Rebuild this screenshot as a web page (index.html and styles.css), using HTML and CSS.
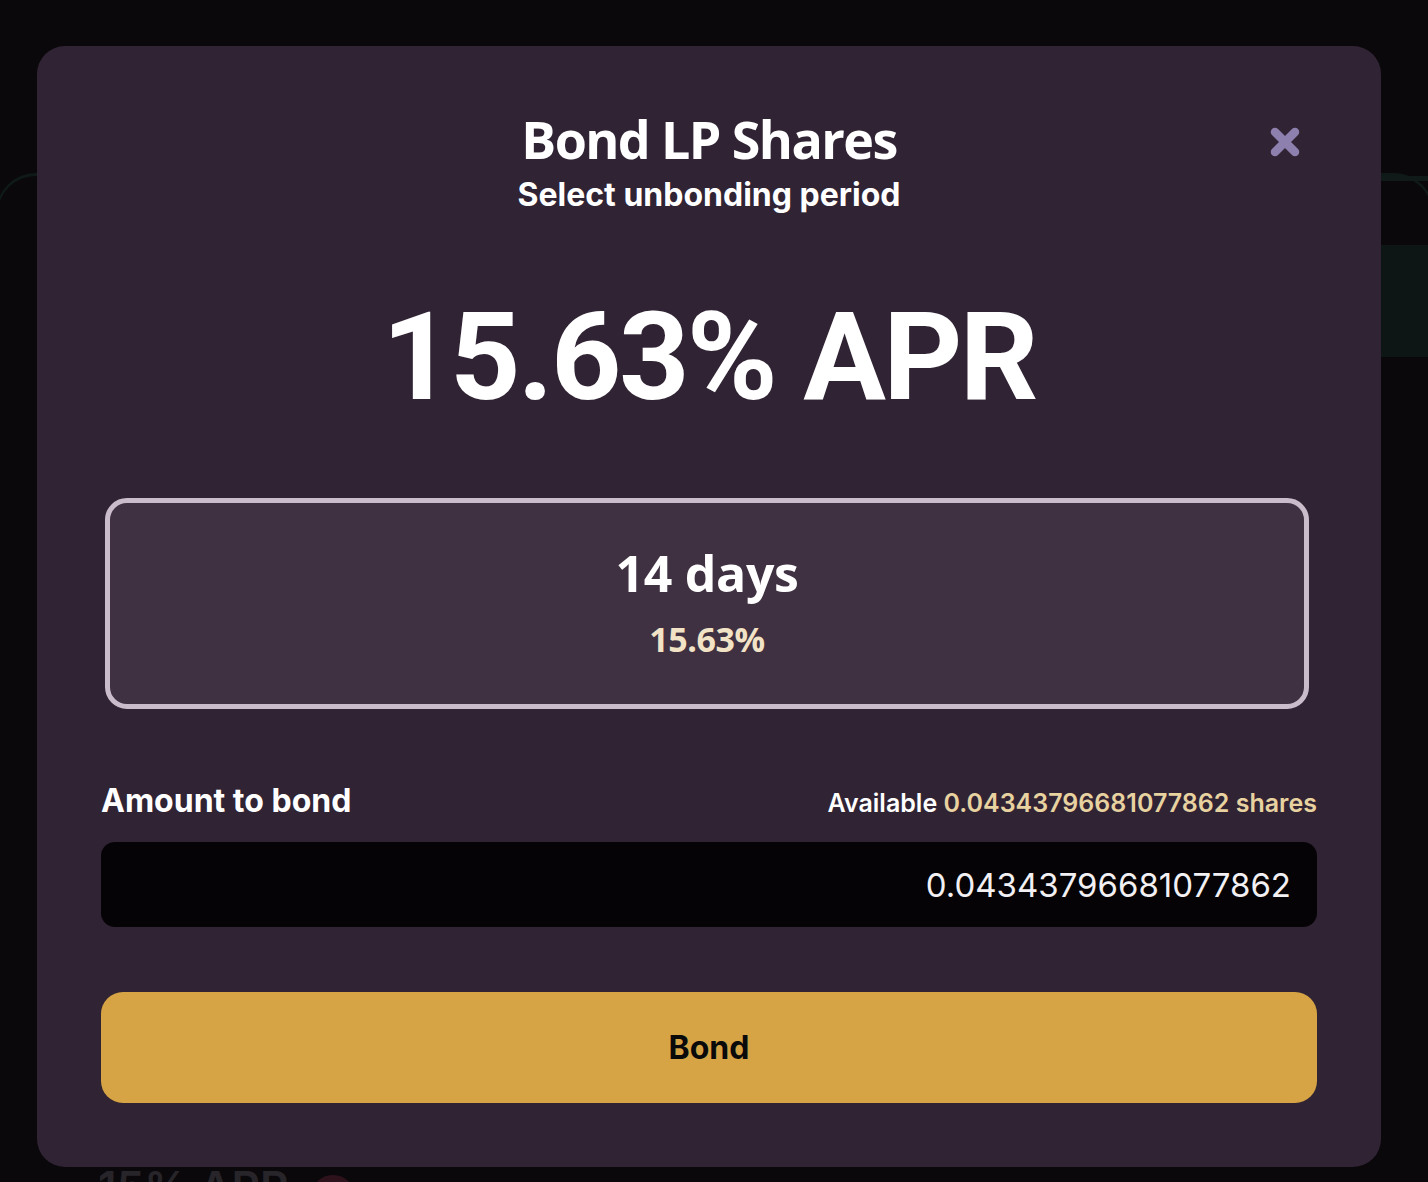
FILE: index.html
```html
<!DOCTYPE html>
<html lang="en">
<head>
<meta charset="utf-8">
<title>Bond LP Shares</title>
<link rel="stylesheet" href="styles.css">
</head>
<body>
<div class="page">
  <div class="bg-card">
    <div class="bg-strip"></div>
    <div class="bg-row">
      <div class="bg-fill"></div>
      <div class="bg-block"></div>
    </div>
    <div class="bg-bottom">
      <span class="bg-apr">15% APR</span>
      <span class="bg-ring"></span>
    </div>
  </div>
</div>

<div class="overlay">
  <div class="modal" role="dialog" aria-labelledby="modal-title">
    <div class="modal-header">
      <div class="spacer"></div>
      <div class="heading">
        <h1 id="modal-title" class="title">Bond LP Shares</h1>
        <p class="subtitle">Select unbonding period</p>
      </div>
      <button class="close" aria-label="Close">
        <svg width="30" height="30" viewBox="0 0 30 30" aria-hidden="true">
          <path d="M5 5 L25 25 M25 5 L5 25" stroke="#8e80ae" stroke-width="8.5" stroke-linecap="round" fill="none"/>
        </svg>
      </button>
    </div>

    <div class="apr">15.63% APR</div>

    <div class="period-card">
      <div class="period-days">14 days</div>
      <div class="period-rate">15.63%</div>
    </div>

    <div class="amount-row">
      <span class="amount-label">Amount to bond</span>
      <span class="available">Available <span class="available-value">0.04343796681077862 shares</span></span>
    </div>

    <input class="amount-input" type="text" value="0.04343796681077862" readonly>

    <button class="bond-btn">Bond</button>
  </div>
</div>
</body>
</html>
```

FILE: styles.css
```css
* {
  box-sizing: border-box;
}

html, body {
  margin: 0;
  padding: 0;
}

body {
  background: #0a080b;
  width: 1428px;
  height: 1182px;
  overflow: hidden;
  font-family: "Inter", "Liberation Sans", sans-serif;
}

/* ---------- background page (dimmed, behind modal) ---------- */
.page {
  padding-top: 173px;
}

.bg-card {
  margin: 0 -6px 0 -4px;
  height: 1040px;
  border: 2px solid #0f1a18;
  border-top-width: 3px;
  border-radius: 40px;
  display: flex;
  flex-direction: column;
}

.bg-strip {
  align-self: flex-end;
  width: 300px;
  height: 5px;
  background: #101a18;
}

.bg-row {
  display: flex;
  margin-top: 64px;
  height: 112px;
}

.bg-fill {
  flex: 1;
}

.bg-block {
  width: 260px;
  background: #0e1615;
}

.bg-bottom {
  margin-top: auto;
  padding: 0 0 0 100px;
  display: flex;
  align-items: flex-start;
  gap: 22px;
  height: 32px;
}

.bg-apr {
  font-family: "Inter", sans-serif;
  font-weight: 600;
  font-size: 44px;
  line-height: 44px;
  color: #28252a;
  margin-top: -14px;
}

.bg-ring {
  width: 44px;
  height: 44px;
  border-radius: 50%;
  border: 8px solid #2e121b;
  margin-top: -4px;
}

/* ---------- modal ---------- */
.overlay {
  position: fixed;
  inset: 0;
  display: flex;
  align-items: flex-start;
  padding: 46px 0 0 37px;
}

.modal {
  width: 1344px;
  background: #302334;
  border-radius: 28px;
  padding: 63px 64px 64px;
  display: flex;
  flex-direction: column;
}

.modal-header {
  display: grid;
  grid-template-columns: 1fr auto 1fr;
}

.heading {
  text-align: center;
}

.title {
  margin: 0;
  font-family: "Open Sans", sans-serif;
  font-weight: 700;
  font-size: 52px;
  line-height: 60px;
  letter-spacing: -1.6px;
  color: #ffffff;
}

.subtitle {
  margin: 7px 0 0;
  font-family: "Inter", sans-serif;
  font-weight: 700;
  font-size: 32px;
  line-height: 38px;
  color: #ffffff;
}

.close {
  justify-self: end;
  align-self: start;
  margin: 18px 17px 0 0;
  padding: 0;
  width: 30px;
  height: 30px;
  border: 0;
  background: transparent;
  cursor: pointer;
  display: flex;
}

.apr {
  margin-top: 82px;
  text-align: center;
  font-family: "Roboto", sans-serif;
  font-weight: 700;
  font-size: 123px;
  line-height: 123px;
  letter-spacing: -2.6px;
  color: #ffffff;
}

.period-card {
  margin: 79px 8px 0 4px;
  border: 5px solid #cbbccb;
  border-radius: 22px;
  background: #3f3042;
  padding: 41px 0 45px;
  text-align: center;
}

.period-days {
  font-family: "Open Sans", sans-serif;
  font-weight: 700;
  font-size: 50px;
  line-height: 58px;
  letter-spacing: -0.3px;
  color: #ffffff;
}

.period-rate {
  margin-top: 17px;
  font-family: "Open Sans", sans-serif;
  font-weight: 700;
  font-size: 34px;
  line-height: 40px;
  letter-spacing: -0.4px;
  color: #f2e3c6;
}

.amount-row {
  margin-top: 73px;
  display: flex;
  justify-content: space-between;
  align-items: baseline;
}

.amount-label {
  font-weight: 700;
  font-size: 32px;
  line-height: 38px;
  color: #ffffff;
}

.available {
  font-weight: 600;
  font-size: 25px;
  line-height: 30px;
  color: #ffffff;
}

.available-value {
  color: #e8d2a0;
}

.amount-input {
  margin-top: 22px;
  width: 100%;
  height: 85px;
  border: 0;
  outline: none;
  border-radius: 14px;
  background: #050305;
  padding: 0 26px;
  text-align: right;
  font-family: "Inter", sans-serif;
  font-size: 33px;
  color: #f2f0f2;
}

.bond-btn {
  margin-top: 65px;
  width: 100%;
  height: 111px;
  border: 0;
  border-radius: 22px;
  background: #d6a444;
  font-family: "Inter", sans-serif;
  font-weight: 700;
  font-size: 32px;
  color: #0b0a0b;
  cursor: pointer;
}
```
